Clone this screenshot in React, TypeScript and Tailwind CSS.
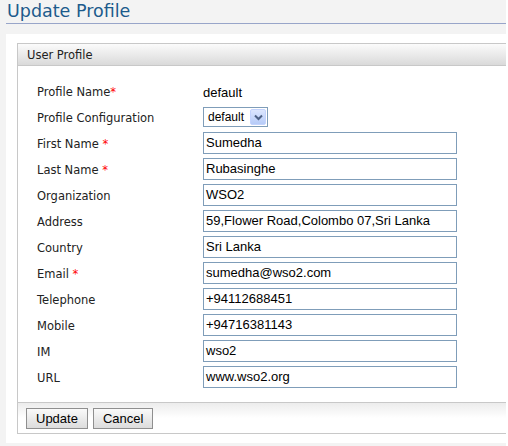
import React from 'react';

const fields: { label: string; required?: boolean; value: string }[] = [
  { label: 'First Name', required: true, value: 'Sumedha' },
  { label: 'Last Name', required: true, value: 'Rubasinghe' },
  { label: 'Organization', value: 'WSO2' },
  { label: 'Address', value: '59,Flower Road,Colombo 07,Sri Lanka' },
  { label: 'Country', value: 'Sri Lanka' },
  { label: 'Email', required: true, value: 'sumedha@wso2.com' },
  { label: 'Telephone', value: '+94112688451' },
  { label: 'Mobile', value: '+94716381143' },
  { label: 'IM', value: 'wso2' },
  { label: 'URL', value: 'www.wso2.org' },
];

const labelFont = "font-['DejaVu_Sans',Verdana,sans-serif] text-[11.5px] text-[#222]";
const valueFont = "font-['Liberation_Sans',Arial,sans-serif] text-[13px] text-black";

function Row({ label, children }: { label: React.ReactNode; children: React.ReactNode }) {
  return (
    <div className="flex h-[26px] items-center">
      <div className={`w-[166px] pt-[3px] ${labelFont}`}>{label}</div>
      <div className="flex-1">{children}</div>
    </div>
  );
}

function Star() {
  return <span className="text-[#ff0000]">*</span>;
}

export default function App() {
  return (
    <div className="w-[508px] h-[446px] bg-white">
      <div className="w-[506px] h-[446px] overflow-hidden bg-[#f3f3f3]">
        <div className="pl-[6px]">
          <h1 className="pl-[1px] pt-[1px] h-[23px] font-['DejaVu_Sans',Verdana,sans-serif] text-[17.5px] leading-[21px] text-[#1d5b8c]">
            Update Profile
          </h1>
          <div className="h-px bg-[#98a5c9]" />
          <div className="mt-[10px] h-[409px] w-[520px] bg-white pl-[11px] pt-[9px]">
            <div className="w-[520px] border border-[#c8c8c8]">
              <div className={`h-[22px] border-b border-[#c8c8c8] bg-gradient-to-b from-[#fbfbfb] to-[#dadada] pl-[9px] leading-[22px] ${labelFont}`}>
                User Profile
              </div>
              <div className="pl-[19px] pt-[12px] pb-[12px]">
                <Row label={<>Profile Name<Star /></>}>
                  <span className={valueFont}>default</span>
                </Row>
                <Row label="Profile Configuration">
                  <div className="flex h-[20px] w-[65px] items-center border border-[#7f9db9] bg-white pl-[4px] pr-[1px]">
                    <span className="flex-1 font-['Liberation_Sans',Arial,sans-serif] text-[12px] text-black">default</span>
                    <span className="flex h-[16px] w-[16px] items-center justify-center rounded-[2px] border border-[#c3d3fd] bg-gradient-to-b from-[#dce6fe] to-[#b6cbf8]">
                      <svg width="9" height="7" viewBox="0 0 9 7">
                        <path d="M1 1.5 L4.5 5 L8 1.5" fill="none" stroke="#4d6185" strokeWidth="2" />
                      </svg>
                    </span>
                  </div>
                </Row>
                {fields.map((f) => (
                  <Row
                    key={f.label}
                    label={
                      <>
                        {f.label}
                        {f.required && <> <Star /></>}
                      </>
                    }
                  >
                    <div className={`flex h-[22px] w-[254px] items-center border border-[#7f9db9] bg-white pl-[2px] ${valueFont}`}>
                      {f.value}
                    </div>
                  </Row>
                ))}
              </div>
              <div className="flex h-[31px] gap-[5px] border-t border-[#c8c8c8] bg-gradient-to-b from-[#ececec] via-white to-white pl-[8px] pt-[5px]">
                {['Update', 'Cancel'].map((b) => (
                  <button
                    key={b}
                    className={`h-[21px] border border-[#8f8f8f] bg-gradient-to-b from-[#fafafa] to-[#dcdcdc] px-[9px] leading-[19px] ${valueFont}`}
                  >
                    {b}
                  </button>
                ))}
              </div>
            </div>
          </div>
        </div>
      </div>
    </div>
  );
}
